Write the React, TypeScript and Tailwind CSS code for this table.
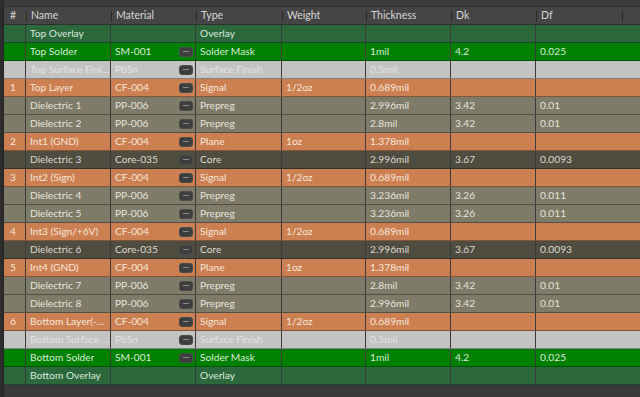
import * as React from "react";

type Kind = "overlay" | "solder" | "surface" | "signal" | "prepreg" | "core";

type Row = {
  n: string;
  name: string;
  material: string;
  type: string;
  weight: string;
  thickness: string;
  dk: string;
  df: string;
  kind: Kind;
};

const rowStyle: Record<Kind, string> = {
  overlay: "bg-[#2b683c] text-[#dbe8dc]",
  solder: "bg-[#008000] text-[#d6ecd6]",
  surface: "bg-[#c3c3c3] text-[#e4e4e4]",
  signal: "bg-[#cc8052] text-[#f6e6da]",
  prepreg: "bg-[#7f7b69] text-[#e6e4de]",
  core: "bg-[#4f4c40] text-[#dcdad2]",
};

const rows: Row[] = [
  { n: "", name: "Top Overlay", material: "", type: "Overlay", weight: "", thickness: "", dk: "", df: "", kind: "overlay" },
  { n: "", name: "Top Solder", material: "SM-001", type: "Solder Mask", weight: "", thickness: "1mil", dk: "4.2", df: "0.025", kind: "solder" },
  { n: "", name: "Top Surface Finish", material: "PbSn", type: "Surface Finish", weight: "", thickness: "0.5mil", dk: "", df: "", kind: "surface" },
  { n: "1", name: "Top Layer", material: "CF-004", type: "Signal", weight: "1/2oz", thickness: "0.689mil", dk: "", df: "", kind: "signal" },
  { n: "", name: "Dielectric 1", material: "PP-006", type: "Prepreg", weight: "", thickness: "2.996mil", dk: "3.42", df: "0.01", kind: "prepreg" },
  { n: "", name: "Dielectric 2", material: "PP-006", type: "Prepreg", weight: "", thickness: "2.8mil", dk: "3.42", df: "0.01", kind: "prepreg" },
  { n: "2", name: "Int1 (GND)", material: "CF-004", type: "Plane", weight: "1oz", thickness: "1.378mil", dk: "", df: "", kind: "signal" },
  { n: "", name: "Dielectric 3", material: "Core-035", type: "Core", weight: "", thickness: "2.996mil", dk: "3.67", df: "0.0093", kind: "core" },
  { n: "3", name: "Int2 (Sign)", material: "CF-004", type: "Signal", weight: "1/2oz", thickness: "0.689mil", dk: "", df: "", kind: "signal" },
  { n: "", name: "Dielectric 4", material: "PP-006", type: "Prepreg", weight: "", thickness: "3.236mil", dk: "3.26", df: "0.011", kind: "prepreg" },
  { n: "", name: "Dielectric 5", material: "PP-006", type: "Prepreg", weight: "", thickness: "3.236mil", dk: "3.26", df: "0.011", kind: "prepreg" },
  { n: "4", name: "Int3 (Sign/+6V)", material: "CF-004", type: "Signal", weight: "1/2oz", thickness: "0.689mil", dk: "", df: "", kind: "signal" },
  { n: "", name: "Dielectric 6", material: "Core-035", type: "Core", weight: "", thickness: "2.996mil", dk: "3.67", df: "0.0093", kind: "core" },
  { n: "5", name: "Int4 (GND)", material: "CF-004", type: "Plane", weight: "1oz", thickness: "1.378mil", dk: "", df: "", kind: "signal" },
  { n: "", name: "Dielectric 7", material: "PP-006", type: "Prepreg", weight: "", thickness: "2.8mil", dk: "3.42", df: "0.01", kind: "prepreg" },
  { n: "", name: "Dielectric 8", material: "PP-006", type: "Prepreg", weight: "", thickness: "2.996mil", dk: "3.42", df: "0.01", kind: "prepreg" },
  { n: "6", name: "Bottom Layer(-6V)", material: "CF-004", type: "Signal", weight: "1/2oz", thickness: "0.689mil", dk: "", df: "", kind: "signal" },
  { n: "", name: "Bottom Surface Finish", material: "PbSn", type: "Surface Finish", weight: "", thickness: "0.5mil", dk: "", df: "", kind: "surface" },
  { n: "", name: "Bottom Solder", material: "SM-001", type: "Solder Mask", weight: "", thickness: "1mil", dk: "4.2", df: "0.025", kind: "solder" },
  { n: "", name: "Bottom Overlay", material: "", type: "Overlay", weight: "", thickness: "", dk: "", df: "", kind: "overlay" },
];

const headers = [
  { label: "#", w: "w-[22px]" },
  { label: "Name", w: "w-[85px]" },
  { label: "Material", w: "w-[85px]" },
  { label: "Type", w: "w-[86px]" },
  { label: "Weight", w: "w-[84px]" },
  { label: "Thickness", w: "w-[85px]" },
  { label: "Dk", w: "w-[85px]" },
  { label: "Df", w: "w-[86px]" },
];

function Cell({ w, children, last }: { w: string; children?: React.ReactNode; last?: boolean }) {
  return (
    <div
      className={`${w} shrink-0 h-full flex items-center pl-[4px] min-w-0 ${
        last ? "" : "border-r border-[#3a3a3a]"
      }`}
    >
      <span className="truncate leading-[15px]">{children}</span>
    </div>
  );
}

function PickButton() {
  return (
    <span className="w-[14px] h-[10px] rounded-[3px] bg-[#3d3d3d] border border-[#4a4a4a] flex items-center justify-center shrink-0">
      <span className="w-[6px] h-px bg-[#8a8a8a]" />
    </span>
  );
}

export default function App() {
  return (
    <div
      className="w-[640px] h-[397px] bg-[#3a3a3a] flex overflow-hidden text-[10.2px] leading-none"
      style={{ fontFamily: "Lato, 'Noto Sans', sans-serif" }}
    >
      <div className="w-[4px] shrink-0 bg-[#2c2c2c] border-r border-[#262626]" />
      <div className="flex-1 flex flex-col min-w-0">
        <div className="h-[7px] shrink-0 bg-[#3b3b3b] border-b border-[#303030]" />
        <div className="h-[18px] shrink-0 bg-[#454545] flex border-b border-[#2e2e2e] text-[#d6d6d6] text-[10.5px]">
          {headers.map((h, i) => (
            <div key={h.label} className={`${h.w} shrink-0 h-full flex items-center relative`}>
              {i > 0 && <span className="absolute left-0 top-[4px] h-[11px] w-px bg-[#2a2a2a]" />}
              <span className={i === 0 ? "pl-[6px]" : "pl-[5px]"}>{h.label}</span>
            </div>
          ))}
          <div className="flex-1 h-full relative">
            <span className="absolute left-0 top-[4px] h-[11px] w-px bg-[#2a2a2a]" />
          </div>
        </div>
        {rows.map((r, i) => (
          <div key={i} className={`h-[18px] shrink-0 flex border-b border-black/35 ${rowStyle[r.kind]}`}>
            <div className="w-[22px] shrink-0 h-full flex items-center pl-[6px] border-r border-[#3a3a3a]">{r.n}</div>
            <Cell w="w-[85px]">{r.name}</Cell>
            <div className="w-[85px] shrink-0 h-full flex items-center gap-[2px] pl-[4px] pr-[2px] border-r border-[#3a3a3a]">
              <span className="truncate leading-[15px] flex-1">{r.material}</span>
              {r.kind !== "overlay" && <PickButton />}
            </div>
            <Cell w="w-[86px]">{r.type}</Cell>
            <Cell w="w-[84px]">{r.weight}</Cell>
            <Cell w="w-[85px]">{r.thickness}</Cell>
            <Cell w="w-[85px]">{r.dk}</Cell>
            <Cell w="w-[86px]" last>
              {r.df}
            </Cell>
            <div className="flex-1" />
          </div>
        ))}
      </div>
    </div>
  );
}
